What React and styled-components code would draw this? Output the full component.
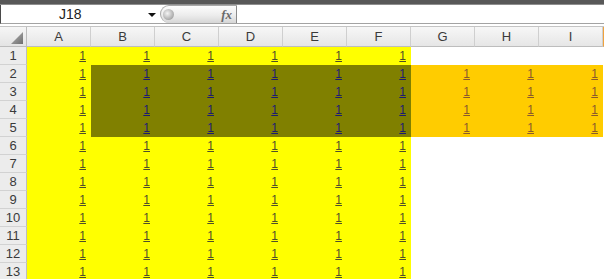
import React from 'react';
import styled, { createGlobalStyle } from 'styled-components';

const GlobalStyle = createGlobalStyle`
  html, body {
    margin: 0;
    padding: 0;
    background: #fff;
    overflow: hidden;
  }
  body {
    font-family: "Liberation Sans", Arial, sans-serif;
  }
`;

const COLUMNS = ['A', 'B', 'C', 'D', 'E', 'F', 'G', 'H', 'I'];
const ROWS = Array.from({ length: 13 }, (_, i) => i + 1);

const FILLS = {
  yellow: { bg: '#ffff00', fg: '#4f4f2a' },
  olive: { bg: '#808000', fg: '#1c1c70' },
  orange: { bg: '#ffcc00', fg: '#8a5a2c' },
  none: { bg: '#ffffff', fg: '#333' },
};

function fillFor(row, col) {
  if (row >= 2 && row <= 5 && col >= 1 && col <= 5) return 'olive';
  if (row >= 2 && row <= 5 && col >= 6) return 'orange';
  if (col <= 5) return 'yellow';
  return 'none';
}

const Window = styled.div`
  width: 604px;
  height: 279px;
  overflow: hidden;
  display: flex;
  flex-direction: column;
`;

const TitleEdge = styled.div`
  height: 4px;
  background: #585858;
  border-bottom: 1px solid #8e8e8e;
  flex-shrink: 0;
`;

const FormulaBar = styled.div`
  display: flex;
  height: 18px;
  border-bottom: 1px solid #a3a3a3;
  border-left: 1px solid #4a4a4a;
  flex-shrink: 0;
`;

const NameBox = styled.div`
  position: relative;
  width: 159px;
  font-size: 14px;
  line-height: 18px;
  color: #222;
  padding-left: 58px;
  box-sizing: border-box;
`;

const DropArrow = styled.span`
  position: absolute;
  right: 4px;
  top: 8px;
  width: 0;
  height: 0;
  border-left: 4px solid transparent;
  border-right: 4px solid transparent;
  border-top: 4px solid #111;
`;

const FxButton = styled.div`
  width: 77px;
  height: 18px;
  border-radius: 9px 0 0 9px;
  border: 1px solid #a8a8a8;
  border-right: 1px solid #8a8a8a;
  border-bottom: none;
  background: linear-gradient(#fdfdfd, #ececec 55%, #d6d6d6);
  display: flex;
  align-items: center;
  justify-content: space-between;
  padding: 0 4px 0 2px;
  box-sizing: border-box;
`;

const Knob = styled.span`
  width: 11px;
  height: 11px;
  border-radius: 50%;
  background: radial-gradient(circle at 40% 40%, #f4f4f4, #a9a9a9 70%, #c9c9c9);
`;

const FxLabel = styled.span`
  font-family: "Liberation Serif", serif;
  font-style: italic;
  font-weight: bold;
  font-size: 13px;
  color: #6a6a6a;
`;

const FormulaInput = styled.div`
  flex: 1;
  background: #fff;
`;

const Spacer = styled.div`
  height: 2px;
  background: #fff;
  border-bottom: 1px solid #c4c4c4;
  flex-shrink: 0;
`;

const Sheet = styled.div`
  display: grid;
  grid-template-columns: 27px repeat(9, 64px) 40px;
  grid-auto-rows: 18px;
  grid-template-rows: 20px;
  font-size: 12px;
`;

const Corner = styled.div`
  background: linear-gradient(#f6f6f6, #e4e4e4);
  border-right: 1px solid #bdbdbd;
  border-bottom: 1px solid #bdbdbd;
  box-sizing: border-box;
  display: flex;
  align-items: flex-end;
  justify-content: flex-end;
  padding: 0 3px 2px 0;
`;

const ColHeader = styled.div`
  background: ${p => (p.$active ? 'linear-gradient(#fbe3b4, #f6c97a)' : 'linear-gradient(#f7f7f7, #e6e6e6)')};
  border-right: 1px solid #cfcfcf;
  border-left: ${p => (p.$active ? '1px solid #f0a23c' : 'none')};
  border-bottom: 1px solid #bdbdbd;
  box-sizing: border-box;
  text-align: center;
  line-height: 19px;
  font-size: 13px;
  color: #3a3a3a;
`;

const RowHeader = styled.div`
  background: #ececec;
  border-right: 1px solid #bdbdbd;
  border-bottom: 1px solid #d2d2d2;
  box-sizing: border-box;
  text-align: center;
  line-height: 18px;
  font-size: 13px;
  color: #3a3a3a;
`;

const Cell = styled.div`
  background: ${p => FILLS[p.$fill].bg};
  color: ${p => FILLS[p.$fill].fg};
  text-align: right;
  padding-right: 5px;
  line-height: 19px;
  text-decoration: underline;
  text-underline-offset: 1px;
`;

const Blank = styled.div`
  background: #fff;
`;

function CornerTriangle() {
  return (
    <svg width="12" height="12" viewBox="0 0 12 12">
      <defs>
        <linearGradient id="tri" x1="0" y1="0" x2="1" y2="1">
          <stop offset="0" stopColor="#b5b5b5" />
          <stop offset="1" stopColor="#6f6f6f" />
        </linearGradient>
      </defs>
      <polygon points="12,0 12,12 0,12" fill="url(#tri)" />
    </svg>
  );
}

export default function App() {
  return (
    <Window>
      <GlobalStyle />
      <TitleEdge />
      <FormulaBar>
        <NameBox>
          J18
          <DropArrow />
        </NameBox>
        <FxButton>
          <Knob />
          <FxLabel>fx</FxLabel>
        </FxButton>
        <FormulaInput />
      </FormulaBar>
      <Spacer />
      <Sheet>
        <Corner>
          <CornerTriangle />
        </Corner>
        {COLUMNS.map(c => (
          <ColHeader key={c}>{c}</ColHeader>
        ))}
        <ColHeader $active />
        {ROWS.map(r => (
          <React.Fragment key={r}>
            <RowHeader>{r}</RowHeader>
            {COLUMNS.map((c, ci) => {
              const fill = fillFor(r, ci);
              return fill === 'none' ? (
                <Blank key={c} />
              ) : (
                <Cell key={c} $fill={fill}>1</Cell>
              );
            })}
            <Blank />
          </React.Fragment>
        ))}
      </Sheet>
    </Window>
  );
}
